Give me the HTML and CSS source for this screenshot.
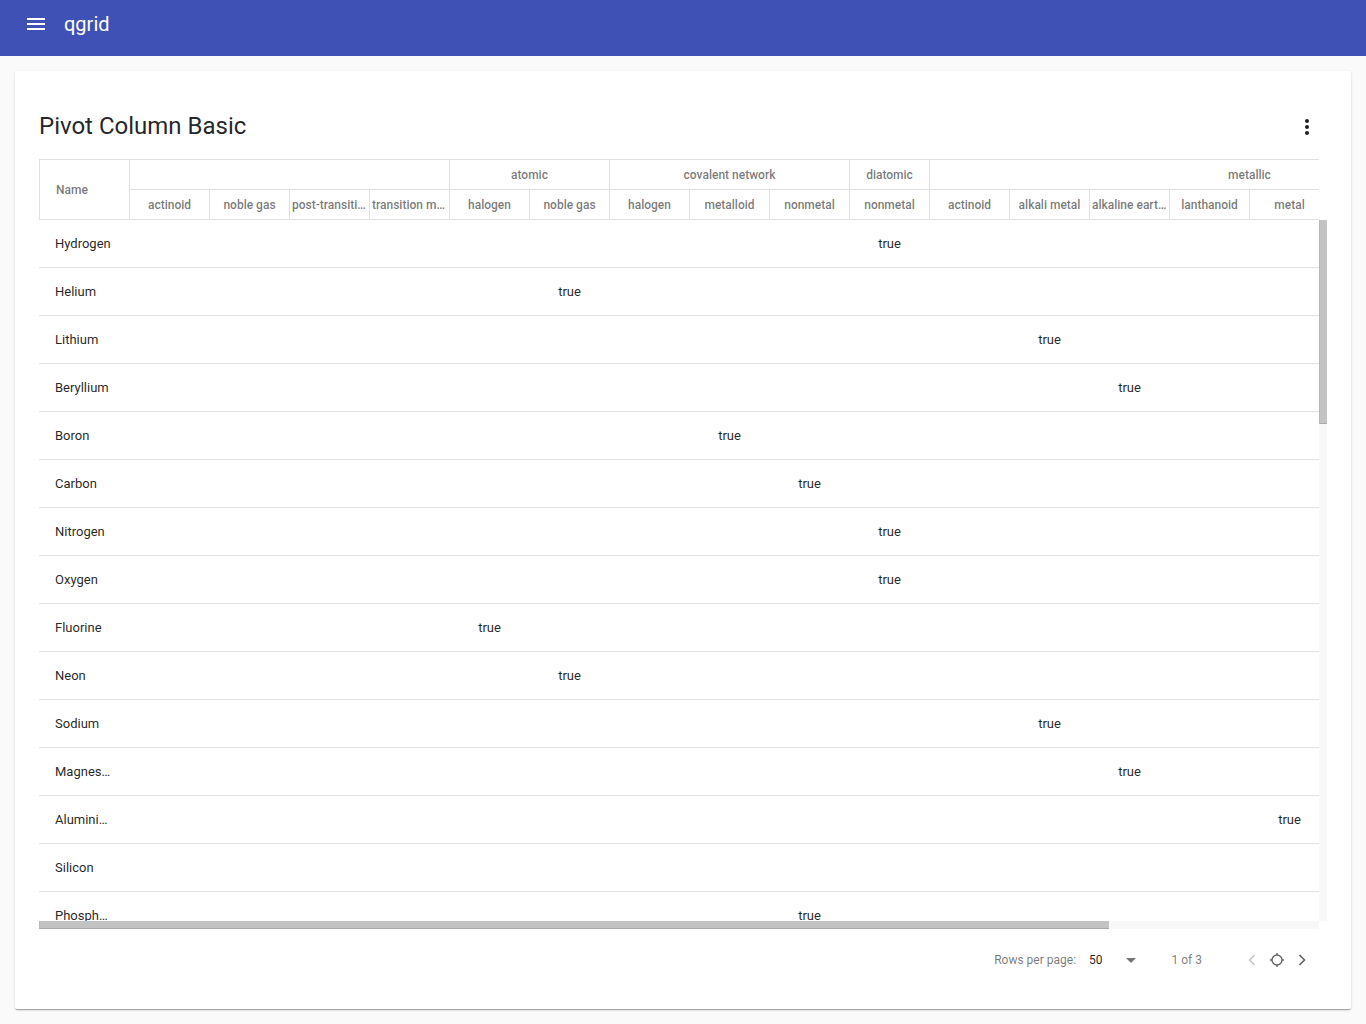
FILE: index.html
```html
<!DOCTYPE html>
<html lang="en">
<head>
<meta charset="utf-8">
<title>qgrid</title>
<link rel="stylesheet" href="styles.css">
</head>
<body>
<header class="toolbar">
  <svg class="menu-icon" width="24" height="24" viewBox="0 0 24 24"><path fill="#fff" d="M3 18h18v-2H3v2zm0-5h18v-2H3v2zm0-7v2h18V6H3z"/></svg>
  <span class="app-title">qgrid</span>
</header>
<main class="page">
  <section class="card">
    <div class="card-head">
      <h1 class="title">Pivot Column Basic</h1>
      <svg class="more" width="24" height="24" viewBox="0 0 24 24"><path fill="#212121" d="M12 8c1.1 0 2-.9 2-2s-.9-2-2-2-2 .9-2 2 .9 2 2 2zm0 2c-1.1 0-2 .9-2 2s.9 2 2 2 2-.9 2-2-.9-2-2-2zm0 6c-1.1 0-2 .9-2 2s.9 2 2 2 2-.9 2-2-.9-2-2-2z"/></svg>
    </div>
    <div class="grid">
      <div class="head">
        <div class="head-inner">
          <div class="hc name-h">Name</div>
          <div class="hc grp g4"></div>
          <div class="hc grp g2">atomic</div>
          <div class="hc grp g3">covalent network</div>
          <div class="hc grp g1">diatomic</div>
          <div class="hc grp g8">metallic</div>
          <div class="hc leaf">actinoid</div>
          <div class="hc leaf">noble gas</div>
          <div class="hc leaf">post-transition metal</div>
          <div class="hc leaf">transition metal</div>
          <div class="hc leaf">halogen</div>
          <div class="hc leaf">noble gas</div>
          <div class="hc leaf">halogen</div>
          <div class="hc leaf">metalloid</div>
          <div class="hc leaf">nonmetal</div>
          <div class="hc leaf">nonmetal</div>
          <div class="hc leaf">actinoid</div>
          <div class="hc leaf">alkali metal</div>
          <div class="hc leaf">alkaline earth metal</div>
          <div class="hc leaf">lanthanoid</div>
          <div class="hc leaf">metal</div>
          <div class="hc leaf">metalloid</div>
          <div class="hc leaf">post-transition metal</div>
          <div class="hc leaf">transition metal</div>
        </div>
      </div>
      <div class="head-gap"></div>
      <div class="body">
        <div class="body-inner">
          <div class="row"><div class="name">Hydrogen</div><div class="val c9">true</div></div>
          <div class="row"><div class="name">Helium</div><div class="val c5">true</div></div>
          <div class="row"><div class="name">Lithium</div><div class="val c11">true</div></div>
          <div class="row"><div class="name">Beryllium</div><div class="val c12">true</div></div>
          <div class="row"><div class="name">Boron</div><div class="val c7">true</div></div>
          <div class="row"><div class="name">Carbon</div><div class="val c8">true</div></div>
          <div class="row"><div class="name">Nitrogen</div><div class="val c9">true</div></div>
          <div class="row"><div class="name">Oxygen</div><div class="val c9">true</div></div>
          <div class="row"><div class="name">Fluorine</div><div class="val c4">true</div></div>
          <div class="row"><div class="name">Neon</div><div class="val c5">true</div></div>
          <div class="row"><div class="name">Sodium</div><div class="val c11">true</div></div>
          <div class="row"><div class="name">Magnesium</div><div class="val c12">true</div></div>
          <div class="row"><div class="name">Aluminium</div><div class="val c14">true</div></div>
          <div class="row"><div class="name">Silicon</div><div class="val c15">true</div></div>
          <div class="row"><div class="name">Phosphorus</div><div class="val c8">true</div></div>
          <div class="row"><div class="name">Sulfur</div><div class="val c8">true</div></div>
        </div>
      </div>
      <div class="vbar"><div class="vthumb"></div></div>
      <div class="hbar"><div class="hthumb"></div></div>
      <div class="corner"></div>
    </div>
    <div class="pager">
      <span class="lbl">Rows per page:</span>
      <span class="size">50</span>
      <svg class="drop" width="10" height="5" viewBox="0 0 10 5"><path fill="#757575" d="M0 0h10L5 5z"/></svg>
      <span class="lbl range">1 of 3</span>
      <svg class="nav prev" width="24" height="24" viewBox="0 0 24 24"><polyline points="14.5,7 9.5,12 14.5,17" fill="none" stroke="#c4c4c4" stroke-width="1.6"/></svg>
      <svg class="nav" width="24" height="24" viewBox="0 0 24 24"><circle cx="12" cy="12" r="5" fill="none" stroke="#616161" stroke-width="1.3"/><path d="M12 5v2M12 17v2M5 12h2M17 12h2" stroke="#616161" stroke-width="1.3"/></svg>
      <svg class="nav" width="24" height="24" viewBox="0 0 24 24"><polyline points="9.5,7 14.5,12 9.5,17" fill="none" stroke="#616161" stroke-width="1.6"/></svg>
    </div>
  </section>
</main>
</body>
</html>
```
FILE: styles.css
```css
* { box-sizing: border-box; }
html, body { margin: 0; padding: 0; }
body {
  background: #fafafa;
  font-family: Roboto, "Noto Sans", "Liberation Sans", sans-serif;
  color: rgba(0,0,0,.87);
  width: 1366px;
  height: 1024px;
  overflow: hidden;
}
.toolbar {
  height: 56px;
  background: #3f51b5;
  display: flex;
  align-items: center;
  padding-left: 24px;
}
.menu-icon { display: block; margin-top: -8px; }
.app-title {
  color: #fff;
  font-size: 20px;
  font-weight: 400;
  margin-left: 16px;
  margin-top: -8px;
}
.page { padding: 15px; }
.card {
  background: #fff;
  height: 938px;
  padding: 24px;
  border-radius: 2px;
  box-shadow: 0 2px 1px -1px rgba(0,0,0,.2), 0 1px 1px 0 rgba(0,0,0,.14), 0 1px 3px 0 rgba(0,0,0,.12);
}
.card-head {
  height: 64px;
  display: flex;
  align-items: center;
  justify-content: space-between;
}
.title {
  margin: 0 0 2px 0;
  font-size: 24px;
  font-weight: 400;
  color: rgba(0,0,0,.87);
}
.more { margin-right: 8px; margin-top: 0; }

.grid {
  width: 1288px;
  display: grid;
  grid-template-columns: 1280px 8px;
  grid-template-rows: 61px 701px 8px;
}
.head { overflow: hidden; }
.head-inner {
  width: 1531px;
  display: grid;
  grid-template-columns: 91px repeat(18, 80px);
  grid-template-rows: 30px 30px;
  border-top: 1px solid #e0e0e0;
}
.hc {
  border-right: 1px solid #e0e0e0;
  border-bottom: 1px solid #e0e0e0;
  font-size: 12px;
  font-weight: 500;
  color: rgba(0,0,0,.54);
  display: flex;
  align-items: center;
  justify-content: center;
  white-space: nowrap;
  overflow: hidden;
  padding: 0 2px;
}
.name-h {
  grid-row: 1 / span 2;
  justify-content: flex-start;
  padding-left: 16px;
  border-left: 1px solid #e0e0e0;
}
.g1 { grid-column: span 1; }
.g2 { grid-column: span 2; }
.g3 { grid-column: span 3; }
.g4 { grid-column: span 4; }
.g8 { grid-column: span 8; }
.leaf {
  display: block;
  line-height: 29px;
  padding-top: 1px;
  text-align: center;
  text-overflow: ellipsis;
}

.body { overflow: hidden; }
.body-inner { width: 1531px; }
.row {
  display: grid;
  grid-template-columns: 91px repeat(18, 80px);
  height: 48px;
  border-bottom: 1px solid #e0e0e0;
  font-size: 13px;
  align-items: center;
}
.name {
  grid-column: 1;
  grid-row: 1;
  padding: 0 18px 0 16px;
  white-space: nowrap;
  overflow: hidden;
  text-overflow: ellipsis;
}
.val { grid-row: 1; text-align: center; padding-right: 1px; }
.c3 { grid-column: 5; }
.c4 { grid-column: 6; }
.c5 { grid-column: 7; }
.c7 { grid-column: 9; }
.c8 { grid-column: 10; }
.c9 { grid-column: 11; }
.c11 { grid-column: 13; }
.c12 { grid-column: 14; }
.c14 { grid-column: 16; }
.c15 { grid-column: 17; }
.c16 { grid-column: 18; }
.c17 { grid-column: 19; }

.vbar { background: #f8f8f8; }
.vthumb {
  height: 204px;
  background: #c3c3c3;
  border-left: 1px solid #b8b8b8;
  border-bottom: 1px solid #a9a9a9;
}
.hbar { background: #f8f8f8; }
.hthumb {
  width: 1070px;
  height: 8px;
  background: #c3c3c3;
  border-left: 1px solid #b8b8b8;
  border-bottom: 1px solid #a9a9a9;
}
.corner { background: #fff; }

.pager {
  height: 56px;
  display: flex;
  align-items: center;
  justify-content: flex-end;
  padding-right: 13px;
  padding-top: 6px;
  font-size: 12px;
}
.lbl { color: rgba(0,0,0,.54); }
.size { margin-left: 13px; color: rgba(0,0,0,.87); }
.drop { margin-left: 23px; }
.range { margin-left: 36px; }
.nav { display: block; margin-left: 1px; }
.prev { margin-left: 38px; }
```
